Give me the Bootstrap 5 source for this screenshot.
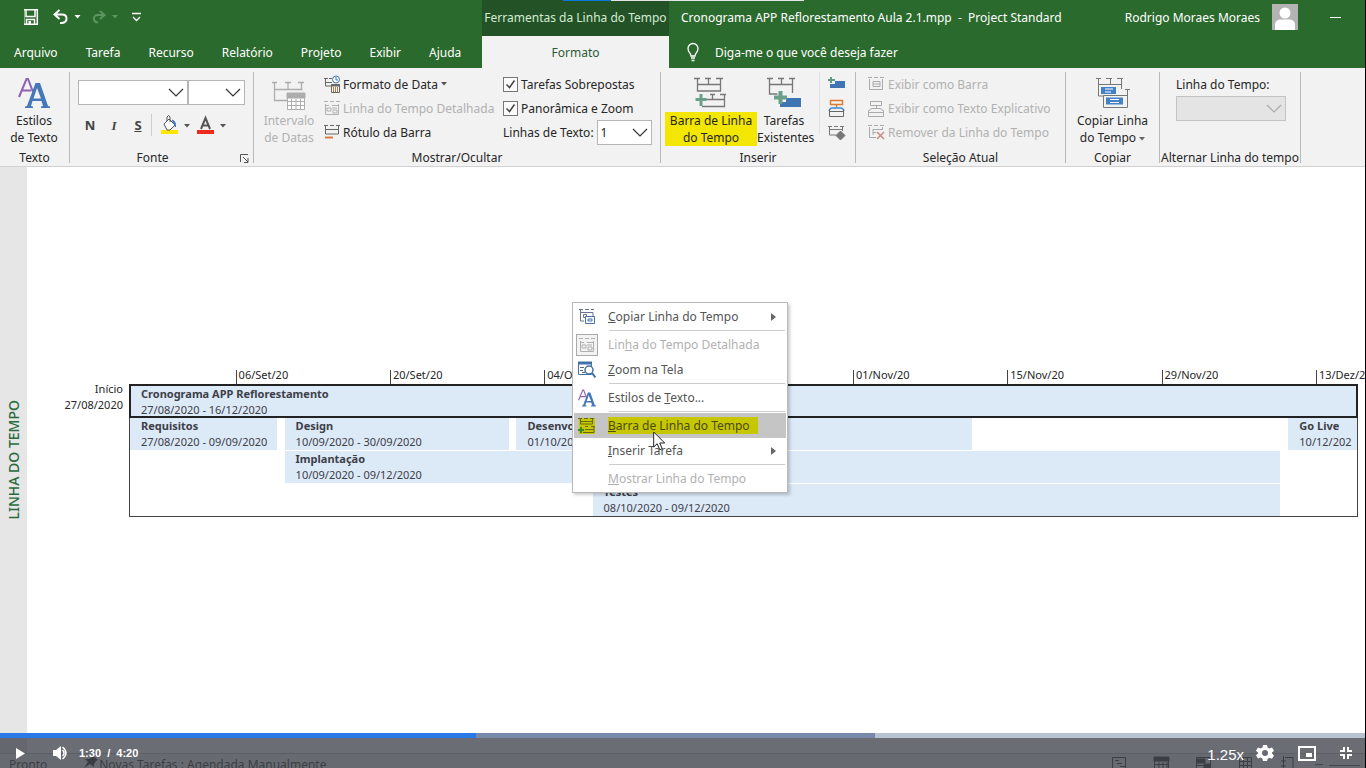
<!DOCTYPE html>
<html lang="pt-BR">
<head>
<meta charset="utf-8">
<meta name="viewport" content="width=device-width, initial-scale=1">
<title>Cronograma APP Reflorestamento Aula 2.1.mpp - Project Standard</title>
<link href="https://cdn.jsdelivr.net/npm/bootstrap@5.3.0/dist/css/bootstrap.min.css" rel="stylesheet">
<style>
  :root { --green: #2b6a2d; --ribbon: #f2f2f2; --ink: #262626; --off: #b1b1b1; }
  body { font: 12px/17px "Noto Sans", "Open Sans", sans-serif; color: var(--ink); background: #fff; border-right: 1px solid #000; }
  button { font: inherit; color: inherit; background: none; border: 0; padding: 0; }
  button:disabled { color: var(--off); }
  svg { display: block; flex: none; }

  /* title bar and tabs */
  .app-head { background: var(--green); color: #fff; }
  .title-row { height: 36px; }
  .title-row > div { padding-bottom: 2px; }
  .tab-row { height: 32px; }
  .head-left { width: 482px; }
  .ctx-col { width: 187px; }
  .ctx-title { background: #225226; color: #d5ecd3; }
  .tab-row a { color: #fff; text-decoration: none; padding: 0 14px; }
  .tab-row a.ctx-tab { background: var(--ribbon); color: #2c5a35; }
  .load-strip { left: 563px; top: 0; width: 241px; height: 1px; background: linear-gradient(90deg, #0b77d8 20%, #e4e4e4 20%); }

  /* ribbon */
  .ribbon { background: var(--ribbon); border-bottom: 1px solid #d2d2d2; height: 99px; padding-top: 4px; }
  .rgroup { height: 91px; border-right: 1px solid #b9b9b9; }
  .rbody { height: 78px; }
  .rlabel { line-height: 15px; text-align: center; white-space: nowrap; }
  .big { width: 72px; padding-top: 4px; line-height: 17px; text-align: center; white-space: nowrap; }
  .big svg { margin: 0 auto; }
  .small-row { height: 24px; display: flex; align-items: center; gap: 3px; white-space: nowrap; }
  .hl span { display: block; background: #f3e600; }
  .combo { appearance: none; height: 25px; border: 1px solid #b5b5b5; border-radius: 0; padding: 0 3px; font: inherit; color: var(--ink);
    background: #fff url("data:image/svg+xml,%3Csvg xmlns='http://www.w3.org/2000/svg' width='16' height='9'%3E%3Cpath d='M1 1l7 7 7-7' fill='none' stroke='%23333' stroke-width='1.2'/%3E%3C/svg%3E") no-repeat right 3px center; }
  .combo:disabled { opacity: 1; border-color: #c3c3c3;
    background: #e4e4e4 url("data:image/svg+xml,%3Csvg xmlns='http://www.w3.org/2000/svg' width='16' height='9'%3E%3Cpath d='M1 1l7 7 7-7' fill='none' stroke='%23aaa' stroke-width='1.2'/%3E%3C/svg%3E") no-repeat right 3px center; }
  .tick { appearance: none; width: 15px; height: 15px; margin: 0; border: 1px solid #777;
    background: #fbfbfb url("data:image/svg+xml,%3Csvg xmlns='http://www.w3.org/2000/svg' width='11' height='11'%3E%3Cpath d='M1.500 5.500l3 3 5-7' fill='none' stroke='%23444' stroke-width='1.500'/%3E%3C/svg%3E") no-repeat center; }
  .fmt { width: 24px; height: 20px; font-size: 13px; color: #444; }

  /* timeline */
  .side { width: 27px; background: #e6e6e6; color: #2a6b3d; }
  .side span { writing-mode: vertical-rl; transform: rotate(180deg); font-size: 14px; line-height: 18px; font-weight: 500; }
  .canvas { padding: 199px 7px 0 0; }
  .start { width: 102px; padding: 15px 6px 0 0; line-height: 16px; text-align: right; font-size: 11px; }
  .axis { height: 18px; padding-left: 9%; font-size: 11px; line-height: 16px; margin-left: -4px; }
  .axis div { flex: 0 0 auto; border-left: 1px solid #444; padding-left: 2px; white-space: nowrap; height: 14px; line-height: 10px; margin-top: 4px; }
  .chart { border: 1px solid #444; height: 133px; font-size: 11px; line-height: 16px; }
  .lane { height: 33px; display: flex; }
  .task { background: #dce9f7; height: 32px; padding-left: 11px; color: #3c4048; white-space: nowrap; overflow: hidden; flex: none; }
  .task b, .task span { display: block; }
  .total { border: 2px solid #222; height: 34px; margin: -1px -1px 0; padding-left: 10px; }

  /* context menu */
  .ctx-menu { left: 545px; top: 135px; width: 216px; background: #fff; border: 1px solid #b9b9b9; padding: 1px; box-shadow: 2px 2px 3px #0003; color: #555; }
  .ctx-menu button { display: flex; align-items: center; width: 100%; height: 25px; text-align: left; padding: 0 10px 0 2px; }
  .ctx-menu button:disabled { color: var(--off); }
  .ctx-menu .ico { width: 22px; height: 22px; margin-right: 10px; display: grid; place-items: center; flex: none; }
  .ctx-menu .framed { border: 1px solid #aaa; background: #f2f2f2; }
  .ctx-menu hr { margin: 1px 1px 1px 35px; border-top: 1px solid #ccc; opacity: 1; }
  .ctx-menu .hot { background: #c5c5c5; }
  .hot mark { background: #c6c700; color: #4b4a12; padding: 0 8px 0 0; }
  .cursor { left: 626px; top: 264px; }

  /* status bar and player */
  .status { height: 15px; background: #f1f1f1; border-top: 1px solid #c8c8c8; line-height: 21px; color: #4c4c4c; padding: 0 5px 0 9px; }
  .player { left: 0; right: 0; bottom: 0; color: #fff; font-family: "Liberation Sans", sans-serif; }
  .seek { height: 5px; border-radius: 0; background: #b6c1d1; }
  .controls { height: 30px; background: rgba(54, 60, 68, .74); padding: 0 13px 0 12px; }
  .clock { font-size: 11px; font-weight: 700; }
  .speed { font-size: 15px; padding-top: 3px; }
</style>
</head>
<body class="vh-100 d-flex flex-column overflow-hidden position-relative">

<header class="app-head">
  <div class="title-row d-flex">
    <div class="head-left d-flex align-items-center ps-4">
      <svg width="130" height="20" viewBox="20 7 130 20" fill="none" stroke="#fff" role="img" aria-label="Acesso rápido">
        <path d="M19.700 9.700h13.600v14.600H19.700zM22 10v6.500h9V10M22.500 24v-4.500h8V24" stroke-width="1.500"/><path d="M24.500 21h2.500v3h-2.500z" fill="#fff" stroke="none"/>
        <path d="M56 10l-5 4.500 5 4.500M51.500 14.500h7c6 0 6 8 0 8.500h-2" transform="translate(-.5)" stroke-width="2"/><path d="M70.500 15h6l-3 3.500z" fill="#fff" stroke="none"/>
        <g stroke="#5c9560"><path d="M96 11l4.500 4-4.500 4M100 15h-6c-6 0-5 7 0 7.500" stroke-width="2"/><path d="M108 15h6l-3 3.500z" fill="#5c9560" stroke="none"/></g>
        <path d="M128 13.500h9M129 17l3.500 3.500L136 17" stroke-width="1.300"/>
      </svg>
    </div>
    <div class="ctx-col ctx-title d-flex align-items-center justify-content-center text-nowrap">Ferramentas da Linha do Tempo</div>
    <div class="d-flex align-items-center flex-grow-1 text-nowrap overflow-hidden">
      <span class="ms-2 ps-1">Cronograma APP Reflorestamento Aula 2.1.mpp &nbsp;-&nbsp; Project Standard</span>
      <span class="ms-auto pe-1">Rodrigo Moraes Moraes</span>
      <svg class="ms-2 me-4 pe-2" style="width:34px" width="26" height="26" viewBox="0 0 26 26"><path fill="#b3b3b3" d="M0 0h26v26H0z"/><circle cx="13" cy="9" r="5.500" fill="#fff"/><path d="M3 26v-5q0-5 5-5.500h10q5 .5 5 5.500v5z" fill="#fff"/></svg>
      <button class="me-4" type="button" aria-label="Minimizar"><svg width="11" height="10"><path d="M0 5.500h11" stroke="#fff"/></svg></button>
    </div>
  </div>
  <div class="tab-row d-flex">
    <nav class="head-left d-flex align-items-center">
      <a href="#">Arquivo</a><a href="#">Tarefa</a><a href="#">Recurso</a><a href="#">Relatório</a><a href="#">Projeto</a><a href="#">Exibir</a><a href="#">Ajuda</a>
    </nav>
    <a href="#" class="ctx-tab ctx-col d-flex align-items-center justify-content-center">Formato</a>
    <a href="#" class="d-flex align-items-center gap-2"><svg class="me-1" width="20" height="20" viewBox="0 0 20 20" fill="none" stroke="#fff" stroke-width="1.300"><path d="M8 14c0-3-3-3.500-3-7.500a5 5 0 0 1 10 0c0 4-3 4.500-3 7.500zM8 16h4M8.500 18.500h3"/></svg>Diga-me o que você deseja fazer</a>
  </div>
</header>
<div class="load-strip position-absolute"></div>

<svg width="0" height="0" class="position-absolute">
  <symbol id="detail" viewBox="0 0 16 16"><path d="M0 1.500h4m2 0h4m2 0h4M1.500 4v10.500h13V4M1.500 5.500H5M8 5.500h6M3 8h4v3H3zM9 10h4v3H9zM8 8h5" fill="none" stroke="currentColor"/></symbol>
  <symbol id="letters" viewBox="0 0 32 32"><path d="M1 20L8.500 2H10l5 13M4 13.500h9" fill="none" stroke="#8d62b5" stroke-width="2"/><path d="M7 31v-1.500l2-.5L17.500 6H22l8 23 2 .5V31h-9v-1.500l2-.5-1.500-5H14.500L13 29l2 .5V31zM15.500 21.500h7.500L19 11z" fill="#4478b9"/></symbol>
</svg>

<section class="ribbon d-flex" aria-label="Formato">
  <div class="rgroup" style="width:70px">
    <div class="rbody d-flex align-items-start"><button type="button" class="big" style="width:68px"><svg width="32" height="36" viewBox="0 0 32 36"><use href="#letters" y="1" width="32" height="32"/></svg>Estilos<br>de Texto</button></div>
    <div class="rlabel">Texto</div>
  </div>

  <div class="rgroup position-relative" style="width:184px">
    <div class="rbody px-2">
      <div class="d-flex pt-2"><select class="combo" style="width:111px" aria-label="Fonte"></select><select class="combo" style="width:57px" aria-label="Tamanho"></select></div>
      <div class="d-flex align-items-center pt-2">
        <button type="button" class="fmt"><b>N</b></button><button type="button" class="fmt"><i style="font-family:'Liberation Serif',serif"><b>I</b></i></button><button type="button" class="fmt"><b><u>S</u></b></button>
        <svg width="80" height="24" viewBox="152 113 80 24"><path d="M153.500 114v22" stroke="#ccc"/><path d="M163 130h17v4h-17z" fill="#ffe600"/><path d="M166 124l5-5 6 6-5 5h-3zM169 121v-4q2-3 3 0v5" fill="#fff" stroke="#555"/><path d="M174 120q4 1 3.500 7-1-4-3.500-7z" fill="#3b78c4" stroke="#3b78c4"/><path d="M186 124h6l-3 3.500zM222 124h6l-3 3.500z" fill="#555"/><path d="M199 130h17v4h-17z" fill="#ed2a1c"/><path d="M203 129l4.500-11 4.500 11M204.500 125.500h6" fill="none" stroke="#555" stroke-width="2"/></svg>
      </div>
    </div>
    <div class="rlabel" style="padding-right:18px">Fonte</div>
    <button type="button" class="position-absolute end-0 bottom-0 me-1" aria-label="Mais opções de fonte"><svg width="9" height="9" fill="none" stroke="#555"><path d="M.5 8V.500H8M3 3l5 5M8 4v4.500H4"/></svg></button>
  </div>

  <div class="rgroup" style="width:407px">
    <div class="rbody d-flex align-items-start">
      <button type="button" class="big flex-shrink-0" disabled style="width:70px"><svg width="36" height="36" viewBox="272 75 36 36" fill="none" stroke="#adadad"><path d="M273 81.500h5m8 0h6m7 0h6M275.500 82v17.500H288M275.500 88.500h28M289 82v6M302.500 82v6" stroke-width="1.300"/><path d="M288.500 92.500h17v16h-17z" fill="#fff"/><path d="M288 92h18v5h-18z" fill="#adadad"/><path d="M289 100.500h17M289 104.500h17M292.500 98v10M297 98v10M301.500 98v10"/></svg>Intervalo<br>de Datas</button>
      <div class="flex-shrink-0" style="width:179px">
        <button type="button" class="small-row"><svg width="16" height="18" viewBox="0 0 16 18" fill="none" stroke="#666"><path d="M0 3.500h4M5 3.500h3M1.500 4v7H7M1.500 7.500H8"/><circle cx="12" cy="4.500" r="3.500" fill="#fff" stroke="#3d74b7"/><path d="M12 2v3h2" stroke="#3d74b7"/><path d="M7.500 9.500h8v8h-8z" fill="#fff"/><path d="M7 10.500h9" stroke-width="2"/><path d="M9.500 12v5m2-5v5m2-5v5" stroke="#d5723c"/></svg>Formato de Data<svg width="6" height="4"><path d="M0 0h6L3 3.500z" fill="#555"/></svg></button>
        <button type="button" class="small-row" disabled><svg width="16" height="16"><use href="#detail"/></svg>Linha do Tempo Detalhada</button>
        <button type="button" class="small-row"><svg width="16" height="16" viewBox="0 0 16 16" fill="none" stroke="#666"><path d="M0 1.500h4m2 0h4m2 0h4M1.500 2v8h13V2M2 5.500h12"/><path d="M1 13.500h8" stroke="#dc7a45" stroke-width="2"/></svg>Rótulo da Barra</button>
      </div>
      <div class="flex-grow-1 pe-2" style="min-width:0">
        <div class="small-row"><input class="tick" type="checkbox" id="sobre" checked><label for="sobre">Tarefas Sobrepostas</label></div>
        <div class="small-row"><input class="tick" type="checkbox" id="pan" checked><label for="pan">Panorâmica e Zoom</label></div>
        <div class="small-row justify-content-end"><label for="linhas">Linhas de Texto:</label><select id="linhas" class="combo" style="width:58px"><option>1</option></select></div>
      </div>
    </div>
    <div class="rlabel">Mostrar/Ocultar</div>
  </div>

  <div class="rgroup" style="width:195px">
    <div class="rbody d-flex align-items-start ps-1">
      <button type="button" class="big hl" style="width:92px"><svg width="36" height="36" viewBox="694 75 36 36" fill="none" stroke="#777" stroke-width="1.300"><path d="M695 77.500h6m5 0h6m5 0h7M698.500 78v12h23V78M699 83.500h22M709.500 78v5"/><path d="M711 93.500h5m5 0h6M703 105.500h22.500v-12M704 98.500h21M713.500 94v4"/><path d="M702 93v12M696.500 98.500h11" stroke="#6a9f8a" stroke-width="3"/></svg><span>Barra de Linha</span><span>do Tempo</span></button>
      <button type="button" class="big" style="width:54px"><svg width="36" height="36" viewBox="766 75 36 36" fill="none" stroke="#777" stroke-width="1.300"><path d="M767 77.500h6m5 0h6m5 0h6M769.500 78v15h8M792.500 78v14M770 83.500h22M781.500 78v5"/><path d="M780 106v-5h6v-4h15v9z" fill="#3f75b3" stroke="none"/><path d="M780.500 90v13M774 96.500h13" stroke="#6a9f8a" stroke-width="4"/></svg>Tarefas<br>Existentes</button>
      <div class="border-start ms-2 ps-2" style="height:62px">
        <button type="button" class="small-row" aria-label="Tarefa"><svg width="18" height="18" viewBox="0 0 18 18"><path d="M2 12V9h5V6h10v7H2z" fill="#3f75b3"/><path d="M3 2v6M0 5h7" stroke="#5f9b85" stroke-width="2"/></svg></button>
        <button type="button" class="small-row" aria-label="Tarefa de texto explicativo"><svg width="18" height="18" viewBox="0 0 18 18" fill="none"><path d="M2.500 1.500h12v4h-12zM8.500 6v2" stroke="#dc7a34" stroke-width="1.500"/><path d="M1 12q1-3 3-3h9q2 0 3 3" stroke="#3f86cc" stroke-width="1.500"/><path d="M1.500 10.500v7h14v-7M2 12.500h13" stroke="#666"/></svg></button>
        <button type="button" class="small-row" aria-label="Marco"><svg width="18" height="18" viewBox="0 0 18 18" fill="none" stroke="#777"><path d="M0 3.500h4m2 0h4m2 0h4M1.500 4v8H8M2 6.500h12M14.500 4v4"/><path d="M12.500 8l4.500 4.500-4.500 4.500L8 12.500z" fill="#777"/></svg></button>
      </div>
    </div>
    <div class="rlabel">Inserir</div>
  </div>

  <div class="rgroup" style="width:210px">
    <div class="rbody ps-2 ms-1">
      <button type="button" class="small-row" disabled><svg width="17" height="16" viewBox="0 0 17 16" fill="none" stroke="#aaa"><path d="M0 1.500h4m2 0h4m2 0h4M1.500 3v10.500h13V3M5 5.500h7v5H5zM5 8h7"/></svg>Exibir como Barra</button>
      <button type="button" class="small-row" disabled><svg width="17" height="17" viewBox="0 0 17 17" fill="none" stroke="#aaa"><path d="M2.500 1.500h11v4h-11zM8.500 6v2M1 11q1-2.500 3-2.500h8q2 0 3 2.500M.5 10.500v6h15v-6M1 12.500h14"/></svg>Exibir como Texto Explicativo</button>
      <button type="button" class="small-row" disabled><svg width="17" height="16" viewBox="0 0 17 16" fill="none" stroke="#aaa"><path d="M0 1.500h4m2 0h4m2 0h4M1.500 3v10.500H8M5 5.500h9M5 8.500h3M5 5v6M14.500 3v3"/><path d="M9 8l7 7m0-7l-7 7" stroke="#c88a85" stroke-width="1.500"/></svg>Remover da Linha do Tempo</button>
    </div>
    <div class="rlabel">Seleção Atual</div>
  </div>

  <div class="rgroup" style="width:94px">
    <div class="rbody d-flex align-items-start justify-content-center"><button type="button" class="big"><svg width="36" height="36" viewBox="1095 75 36 36" fill="none" stroke="#777"><path d="M1096 77.500h5m5 0h6m5 0h6M1098.500 78v17h5M1110.500 78v5M1121.500 78v10M1099 83.500h22M1125 88.500h5"/><path d="M1101 86h15v7h-15zM1106 96.500h17v7h-17z" fill="#4481c6" stroke="none"/><path d="M1103.500 94.500h24v12h-24zM1127.500 89v7"/><path d="M1105 88h8M1105 91h6M1110 98.500h9M1110 101.500h9" stroke="#fff"/></svg>Copiar Linha<br>do Tempo <svg width="6" height="4" class="d-inline-block m-0 align-middle"><path d="M0 0h6L3 3.500z" fill="#666"/></svg></button></div>
    <div class="rlabel">Copiar</div>
  </div>

  <div class="rgroup" style="width:141px">
    <div class="rbody ps-3">
      <label class="small-row" for="alt">Linha do Tempo:</label>
      <select id="alt" class="combo" disabled style="width:110px"></select>
    </div>
    <div class="rlabel">Alternar Linha do tempo</div>
  </div>
</section>

<main class="d-flex flex-grow-1 position-relative overflow-hidden">
  <div class="side d-flex align-items-center justify-content-center"><span>LINHA DO TEMPO</span></div>
  <div class="canvas flex-grow-1 d-flex align-items-start">
    <div class="start flex-shrink-0">Início<br>27/08/2020</div>
    <div class="flex-grow-1" style="min-width:0">
      <div class="axis d-flex">
        <div style="width:13.750%">06/Set/20</div><div style="width:13.750%">20/Set/20</div><div style="width:13.750%">04/Out/20</div><div style="width:13.750%">18/Out/20</div><div style="width:13.750%">01/Nov/20</div><div style="width:13.750%">15/Nov/20</div><div style="width:13.750%">29/Nov/20</div><div>13/Dez/20</div>
      </div>
      <div class="chart">
        <div class="task total"><b>Cronograma APP Reflorestamento</b><span>27/08/2020 - 16/12/2020</span></div>
        <div class="lane"><div class="task" style="width:12%"><b>Requisitos</b><span>27/08/2020 - 09/09/2020</span></div><div class="task" style="width:18.300%;margin-left:.6%"><b>Design</b><span>10/09/2020 - 30/09/2020</span></div><div class="task" style="width:37.100%;margin-left:.6%"><b>Desenvolvimento</b><span>01/10/2020 - 11/11/2020</span></div><div class="task ms-auto" style="width:5.600%"><b>Go Live</b><span>10/12/202</span></div></div>
        <div class="lane"><div class="task" style="width:81.100%;margin-left:12.600%"><b>Implantação</b><span>10/09/2020 - 09/12/2020</span></div></div>
        <div class="lane"><div class="task" style="width:56%;margin-left:37.700%"><b>Testes</b><span>08/10/2020 - 09/12/2020</span></div></div>
      </div>
    </div>
  </div>

  <div class="ctx-menu position-absolute" style="margin-left:27px">
    <button type="button"><span class="ico"><svg width="17" height="17" viewBox="0 0 17 17" fill="none" stroke="#6a6f8c"><path d="M0 1.500h4m2 0h4m2 0h3M1.500 2v11H5M2 4.500h12V8M4.500 6.500h3v3h-3z"/><path d="M6.500 8.500h9v7h-9zM9 11h4v2H9z" fill="#fff" stroke="#4571ad"/></svg></span><span><u>C</u>opiar Linha do Tempo</span><svg class="ms-auto" width="5" height="8"><path d="M0 0l5 4-5 4z" fill="#666"/></svg></button>
    <hr>
    <button type="button" disabled><span class="ico framed"><svg width="16" height="16"><use href="#detail"/></svg></span><span>Lin<u>h</u>a do Tempo Detalhada</span></button>
    <button type="button"><span class="ico"><svg width="18" height="17" viewBox="0 0 18 17" fill="none" stroke="#4070a8"><path d="M.5 1.500h13v12H.500z"/><path d="M0 2h14" stroke-width="3"/><path d="M2 6.500h4M2 9.500h3M4 11.500h3" stroke="#666"/><circle cx="11" cy="9" r="4" fill="#fff" stroke-width="1.500"/><path d="M14 12l3.500 4.500" stroke-width="2"/></svg></span><span><u>Z</u>oom na Tela</span></button>
    <hr>
    <button type="button"><span class="ico"><svg width="18" height="18"><use href="#letters"/></svg></span><span>Estilos de <u>T</u>exto...</span></button>
    <hr>
    <button type="button" class="hot"><span class="ico"><svg width="18" height="18" viewBox="0 0 18 18" fill="none" stroke="#666b10"><path fill="#c6c700" stroke="none" d="M1 1h16v16H1z"/><path d="M0 1.500h4m2 0h4m2 0h4M2.500 2v5h12V2M3 4.500h11M7 9.500h3m3 0h4M5 15.500h11V10M7 12.500h9"/><path d="M3 10v6M0 13h6" stroke="#3f8a1e" stroke-width="2"/></svg></span><mark><u>B</u>arra de Linha do Tempo</mark></button>
    <button type="button"><span class="ico"></span><span><u>I</u>nserir Tarefa</span><svg class="ms-auto" width="5" height="8"><path d="M0 0l5 4-5 4z" fill="#666"/></svg></button>
    <hr>
    <button type="button" disabled><span class="ico"></span><span><u>M</u>ostrar Linha do Tempo</span></button>
  </div>
  <svg class="cursor position-absolute" style="margin-left:27px" width="13" height="20" viewBox="0 0 13 20"><path d="M.7 1v15l3.500-3.300 2.500 6 2.500-1-2.500-5.700h5z" fill="#fff" stroke="#222"/></svg>
</main>

<footer class="status d-flex overflow-hidden">
  <span>Pronto</span>
  <svg class="ms-auto order-2" width="250" height="14" viewBox="1110 754 250 14" fill="none" stroke="#4c4c4c"><path d="M1112.500 770v-12.500h13V770M1115 760.500h4M1117 763.500h5M1120 766.500h5M1154.500 770v-12.500h14V770M1159 762v8m4-8v8m4-8v8M1155 764.500h13"/><path d="M1154 757h15v4h-15z" fill="#4c4c4c"/><path d="M1196.500 770v-12.500h14V770M1197 765.500h13"/><path d="M1197 759h8v4h-8zM1204 764h6v4h-6z" fill="#4c4c4c"/><path d="M1239.500 770v-12.500h12V770M1243.500 758v12m4-12v12M1240 761.500h11M1240 765.500h11M1285 757.500h8V770M1283.500 756v12M1281 761h5M1281 766h5"/><path d="M1315 764.500h8M1329 765.500h31" stroke="#666"/></svg>
  <svg width="15" height="15" viewBox="0 0 15 15" style="margin-left:37px"><path d="M8 1l6 5-2 1-2 3v3L6 10l-6 4 4-6-3-3h4l3-2z" fill="#444"/></svg><span class="text-nowrap">Novas Tarefas : Agendada Manualmente</span>
</footer>

<div class="player position-absolute">
  <div class="seek d-flex"><div style="width:34.900%;background:#297ae6"></div><div style="width:29.200%;background:#7989a9"></div></div>
  <div class="controls d-flex align-items-center">
    <button type="button" class="ms-1" aria-label="Reproduzir"><svg width="9" height="11"><path d="M0 0l9 5.500L0 11z" fill="#fff"/></svg></button>
    <button type="button" class="ms-4 ps-1" aria-label="Volume"><svg width="14" height="14" viewBox="0 0 14 14"><path d="M0 4h3l5-4v14l-5-4H0z" fill="#fff"/><path d="M9.500 4q3 3 0 6M9.500 1q7 6 0 12" fill="none" stroke="#fff" stroke-width="1.500"/></svg></button>
    <span class="clock ms-2 ps-1">1:30 &nbsp;/&nbsp; 4:20</span>
    <button type="button" class="speed ms-auto">1.25x</button>
    <button type="button" class="ms-2 ps-1" aria-label="Configurações"><svg width="18" height="18" viewBox="0 0 18 18"><path d="M7 1h4l.5 2.500 2 1L16 3.500l2 3.300-2 1.800v1l2 1.800-2 3.300-2.500-1-2 1.200L11 17H7l-.5-2.300-2-1.200-2.500 1-2-3.300 2-1.800v-1L0 6.800l2-3.300 2.500 1 2-1z" fill="#fff"/><circle cx="9" cy="9" r="3" fill="#666c73"/></svg></button>
    <button type="button" class="ms-4" aria-label="Miniplayer"><svg width="18" height="15"><path d="M1 1h16v13H1z" fill="none" stroke="#fff" stroke-width="2"/><path d="M8 7h6v4H8z" fill="#fff"/></svg></button>
    <button type="button" class="ms-4" aria-label="Sair da tela cheia"><svg width="12" height="12" fill="none" stroke="#fff" stroke-width="2"><path d="M0 4h4V0M8 0v4h4M0 8h4v4M12 8H8v4"/></svg></button>
  </div>
</div>

<script src="https://cdn.jsdelivr.net/npm/bootstrap@5.3.0/dist/js/bootstrap.bundle.min.js"></script>
</body>
</html>
